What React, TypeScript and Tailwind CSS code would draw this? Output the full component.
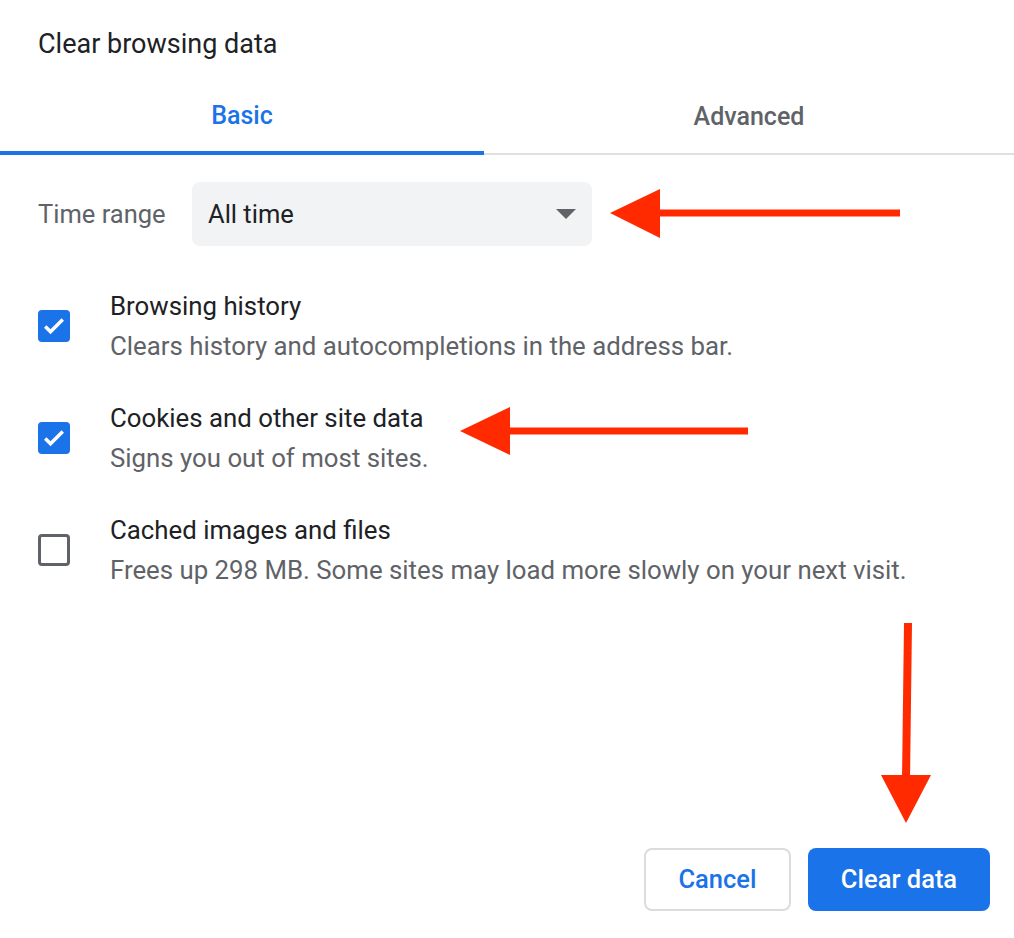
import React from 'react';

const items = [
  { title: 'Browsing history', desc: 'Clears history and autocompletions in the address bar.', checked: true },
  { title: 'Cookies and other site data', desc: 'Signs you out of most sites.', checked: true },
  { title: 'Cached images and files', desc: 'Frees up 298 MB. Some sites may load more slowly on your next visit.', checked: false },
];

const Check: React.FC<{ checked: boolean }> = ({ checked }) =>
  checked ? (
    <div className="w-8 h-8 rounded-[4px] bg-[#1a73e8] flex items-center justify-center">
      <svg width="28" height="28" viewBox="0 0 24 24" fill="none" stroke="white" strokeWidth="3">
        <path d="M4.5 12.5l4.5 4.5L19.5 6.5" />
      </svg>
    </div>
  ) : (
    <div className="w-8 h-8 rounded-[4px] border-[3px] border-[#5f6368]" />
  );

export default function App() {
  return (
    <div className="relative w-[1014px] h-[938px] bg-white overflow-hidden" style={{ fontFamily: 'Roboto, "Liberation Sans", sans-serif' }}>
      <h1 className="pl-[38px] pt-[25px] text-[27px] text-[#202124] leading-[38px]">Clear browsing data</h1>
      <div className="flex mt-[26px] border-b-2 border-[#e0e0e0]">
        <div className="w-[484px] h-[66px] flex items-center justify-center text-[25px] font-medium text-[#1a73e8] border-b-4 border-[#1a73e8] mb-[-2px] pb-2">Basic</div>
        <div className="flex-1 h-[64px] flex items-center justify-center text-[25px] font-medium text-[#5f6368] pb-2">Advanced</div>
      </div>
      <div className="flex items-center mt-[27px] pl-[38px]">
        <span className="text-[25.5px] text-[#5f6368] w-[154px]">Time range</span>
        <div className="w-[400px] h-[64px] rounded-[8px] bg-[#f1f3f4] flex items-center justify-between pl-4 pr-4">
          <span className="text-[25.5px] text-[#202124]">All time</span>
          <svg width="20" height="10" viewBox="0 0 20 10"><path d="M0 0h20L10 10z" fill="#5f6368" /></svg>
        </div>
      </div>
      <div className="mt-[42px] flex flex-col gap-[36px]">
        {items.map(it => (
          <div key={it.title} className="flex items-center pl-[38px]">
            <div className="w-[72px]"><Check checked={it.checked} /></div>
            <div className="flex flex-col">
              <span className="text-[25.8px] leading-[36px] text-[#202124]">{it.title}</span>
              <span className="text-[25.8px] leading-[36px] text-[#5f6368] mt-[4px]">{it.desc}</span>
            </div>
          </div>
        ))}
      </div>
      <div className="absolute right-[24px] bottom-[27px] flex gap-[17px]">
        <button className="w-[147px] h-[63px] rounded-[8px] border-2 border-[#dadce0] text-[25.5px] font-medium text-[#1a73e8]">Cancel</button>
        <button className="w-[182px] h-[63px] rounded-[8px] bg-[#1a73e8] text-[25.5px] font-medium text-white">Clear data</button>
      </div>
      <svg className="absolute inset-0 pointer-events-none" width="1014" height="938">
        <g fill="#ff2a00" stroke="#ff2a00">
          <line x1="900" y1="213" x2="655" y2="213" strokeWidth="7" />
          <path d="M610 213L660 189V238z" stroke="none" />
          <line x1="748" y1="431" x2="505" y2="431" strokeWidth="7" />
          <path d="M460 431L510 407V455z" stroke="none" />
          <line x1="908" y1="623" x2="906" y2="780" strokeWidth="8" />
          <path d="M881 775H931L906 823z" stroke="none" />
        </g>
      </svg>
    </div>
  );
}
